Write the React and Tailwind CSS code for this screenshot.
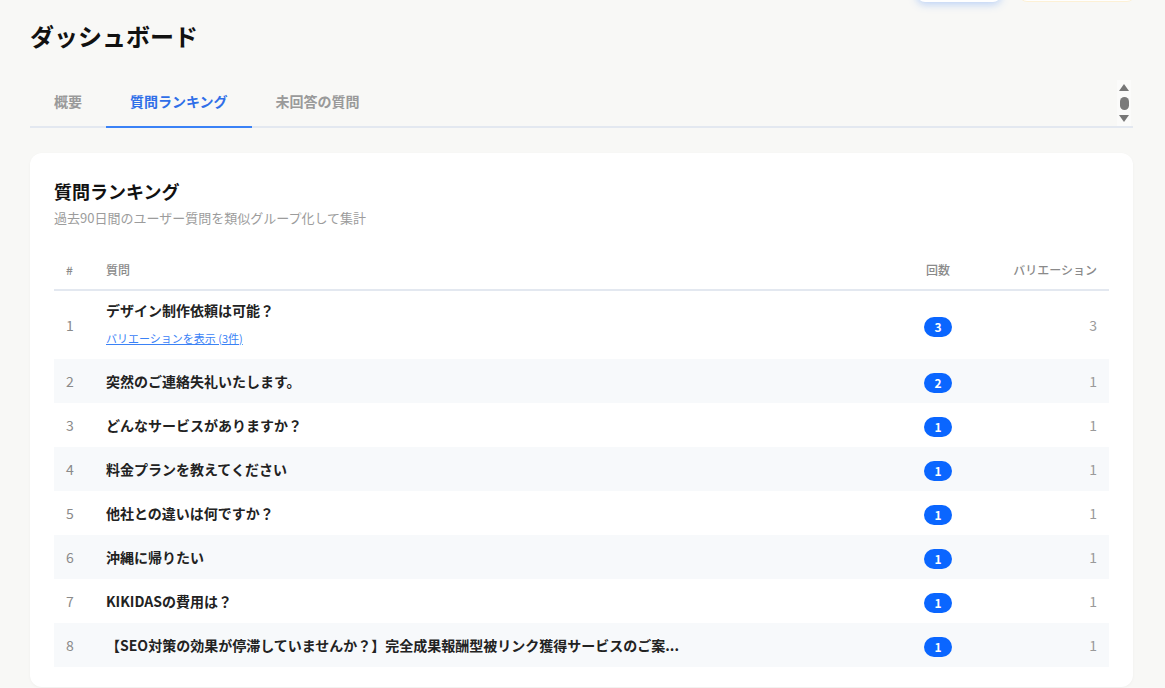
const rows = [
  { q: "デザイン制作依頼は可能？", count: 3, vars: 3, link: "バリエーションを表示 (3件)" },
  { q: "突然のご連絡失礼いたします。", count: 2, vars: 1 },
  { q: "どんなサービスがありますか？", count: 1, vars: 1 },
  { q: "料金プランを教えてください", count: 1, vars: 1 },
  { q: "他社との違いは何ですか？", count: 1, vars: 1 },
  { q: "沖縄に帰りたい", count: 1, vars: 1 },
  { q: "KIKIDASの費用は？", count: 1, vars: 1 },
  { q: "【SEO対策の効果が停滞していませんか？】完全成果報酬型被リンク獲得サービスのご案...", count: 1, vars: 1 },
];

const tabs = ["概要", "質問ランキング", "未回答の質問"];

export default function App() {
  return (
    <div
      className="min-h-[688px] bg-[#f8f8f6] pl-[30px] pr-[32px] overflow-hidden"
      style={{ fontFamily: '"Noto Sans CJK JP", "Noto Sans", sans-serif' }}
    >
      {/* header buttons cut off at the top */}
      <div className="flex justify-end gap-4 -mt-[36px] h-[39px]">
        <div className="w-[84px] h-[38px] rounded-lg bg-white shadow-[0_2px_8px_rgba(59,130,246,0.35)] mr-[2px]" />
        <div className="w-[116px] h-[38px] rounded-lg bg-white border border-[#fdf1d6] mr-[-2px]" />
      </div>

      <h1 className="text-[24px] font-bold text-[#111] leading-[32px] mt-[17px]">ダッシュボード</h1>

      <div className="mt-[30px] flex items-stretch border-b-2 border-[#e3e8f0]">
        {tabs.map((t, i) => (
          <div
            key={t}
            className={`px-6 h-[46px] pb-[6px] flex items-center text-[14px] font-bold -mb-[2px] border-b-2 ${
              i === 1 ? "text-[#2f6fe8] border-[#3b82f6]" : "text-[#9a9a9a] border-transparent"
            }`}
          >
            {t}
          </div>
        ))}
        <div className="ml-auto w-[14px] mr-[2px] -mt-[2px] bg-[#fbfbfa] flex flex-col items-center justify-between py-[4px]">
          <svg width="10" height="7" viewBox="0 0 10 7"><path d="M5 0L10 7H0Z" fill="#777" /></svg>
          <div className="w-[9px] h-[13px] rounded-full bg-[#7a7a7a]" />
          <svg width="10" height="7" viewBox="0 0 10 7"><path d="M0 0H10L5 7Z" fill="#777" /></svg>
        </div>
      </div>

      <div className="mt-[25px] bg-white rounded-xl shadow-[0_1px_3px_rgba(0,0,0,0.04)] pt-[25px] px-6 pb-5">
        <h2 className="text-[18px] font-bold text-[#111] leading-[26px]">質問ランキング</h2>
        <p className="text-[13px] text-[#9c9c9c] leading-[20px] mt-[4px]">過去90日間のユーザー質問を類似グループ化して集計</p>

        <table className="w-full mt-[22px] border-collapse">
          <thead>
            <tr className="border-b-2 border-[#e3e8f0] text-[12px] text-[#8a8a8a] font-medium">
              <th className="w-[52px] h-[40px] pl-3 text-left font-medium">#</th>
              <th className="text-left font-medium">質問</th>
              <th className="w-[86px] text-center font-medium">回数</th>
              <th className="w-[128px] pr-3 text-right font-medium">バリエーション</th>
            </tr>
          </thead>
          <tbody>
            {rows.map((r, i) => (
              <tr key={i} className={i % 2 === 1 ? "bg-[#f7f9fb]" : "bg-white"}>
                <td className={`pl-3 text-[14px] text-[#8a8a8a] ${i === 0 ? "h-[69px]" : "h-[44px]"}`}>{i + 1}</td>
                <td className="text-[14px] font-semibold text-[#222]">
                  <div className={i === 0 ? "leading-[20px] -mt-[4px]" : "leading-[20px]"}>{r.q}</div>
                  {r.link && (
                    <div className="text-[11px] text-[#3b82f6] underline leading-[16px] mt-[10px] font-normal">{r.link}</div>
                  )}
                </td>
                <td className="text-center">
                  <span className="inline-flex items-center justify-center w-[28px] h-[20px] rounded-full bg-[#0a66ff] text-white text-[12px] font-bold">
                    {r.count}
                  </span>
                </td>
                <td className="pr-3 text-right text-[14px] text-[#9a9a9a]">{r.vars}</td>
              </tr>
            ))}
          </tbody>
        </table>
      </div>
    </div>
  );
}
